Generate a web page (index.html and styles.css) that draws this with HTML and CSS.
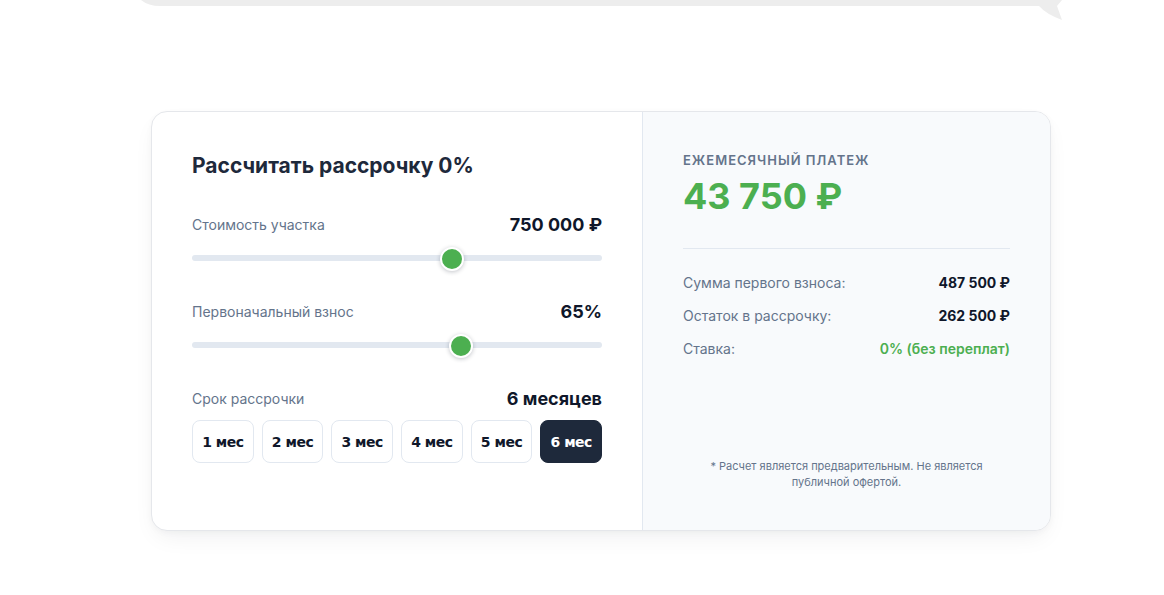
FILE: index.html
```html
<!DOCTYPE html>
<html lang="ru">
<head>
<meta charset="utf-8">
<title>Рассрочка</title>
<link rel="stylesheet" href="styles.css">
</head>
<body>
<div class="bubble">
  <svg width="1164" height="22" viewBox="0 0 1164 22">
    <path d="M130 -30 H1062 V0 L1057 6 L1062 20 Q1046 14 1039 6 H160 Q145 6 137 -4 Z" fill="#ededed"/>
  </svg>
</div>
<section class="section">
  <div class="card">
    <div class="calc">
      <h2 class="title">Рассчитать рассрочку 0%</h2>

      <div class="group">
        <div class="row">
          <span class="label">Стоимость участка</span>
          <span class="value">750 000 ₽</span>
        </div>
        <div class="slider">
          <div class="track"></div>
          <div class="thumb" style="left: 63.4%"></div>
        </div>
      </div>

      <div class="group">
        <div class="row">
          <span class="label">Первоначальный взнос</span>
          <span class="value">65%</span>
        </div>
        <div class="slider">
          <div class="track"></div>
          <div class="thumb" style="left: 65.6%"></div>
        </div>
      </div>

      <div class="group">
        <div class="row">
          <span class="label">Срок рассрочки</span>
          <span class="value">6 месяцев</span>
        </div>
        <div class="terms">
          <button class="term">1 мес</button>
          <button class="term">2 мес</button>
          <button class="term">3 мес</button>
          <button class="term">4 мес</button>
          <button class="term">5 мес</button>
          <button class="term active">6 мес</button>
        </div>
      </div>
    </div>

    <div class="result">
      <div class="result-label">Ежемесячный платеж</div>
      <div class="result-sum">43 750 ₽</div>
      <div class="divider"></div>
      <div class="lines">
        <div class="line"><span class="line-label">Сумма первого взноса:</span><span class="line-value">487 500 ₽</span></div>
        <div class="line"><span class="line-label">Остаток в рассрочку:</span><span class="line-value">262 500 ₽</span></div>
        <div class="line"><span class="line-label">Ставка:</span><span class="line-value green">0% (без переплат)</span></div>
      </div>
      <p class="note">* Расчет является предварительным. Не является публичной офертой.</p>
    </div>
  </div>
</section>
</body>
</html>
```

FILE: styles.css
```css
* { box-sizing: border-box; }

html, body {
  margin: 0;
  padding: 0;
  background: #ffffff;
  font-family: "Inter", "Noto Sans", "DejaVu Sans", sans-serif;
  color: #0f172a;
}

.bubble svg { display: block; }

.section {
  padding: 89px 0 60px 151px;
}

.card {
  width: 900px;
  min-height: 420px;
  display: grid;
  grid-template-columns: 490px 1fr;
  border: 1px solid #e5e7eb;
  border-radius: 16px;
  background: #ffffff;
  overflow: hidden;
  box-shadow: 0 10px 24px -6px rgba(15, 23, 42, 0.07), 0 2px 6px rgba(15, 23, 42, 0.03);
}

.calc {
  padding: 40px;
  display: flex;
  flex-direction: column;
}

.title {
  margin: 0 0 32px;
  font-size: 21px;
  line-height: 28px;
  font-weight: 700;
  color: #1e293b;
}

.group + .group { margin-top: 29px; }

.row {
  display: flex;
  justify-content: space-between;
  align-items: center;
  height: 24px;
}

.label {
  font-size: 14px;
  color: #64748b;
}

.value {
  font-size: 18px;
  font-weight: 700;
  color: #0f172a;
}

.slider {
  position: relative;
  height: 24px;
  margin-top: 10px;
  display: flex;
  align-items: center;
}

.track {
  width: 100%;
  height: 6px;
  border-radius: 3px;
  background: #e2e8f0;
}

.thumb {
  position: absolute;
  top: 1px;
  width: 24px;
  height: 24px;
  margin-left: -12px;
  border-radius: 50%;
  background: #4caf50;
  border: 2px solid #ffffff;
  box-shadow: 0 1px 4px rgba(15, 23, 42, 0.25);
}

.terms {
  display: flex;
  gap: 8px;
  margin-top: 10px;
}

.term {
  flex: 1;
  height: 43px;
  padding: 0;
  border: 1px solid #e2e8f0;
  border-radius: 8px;
  background: #ffffff;
  color: #0f172a;
  font-family: "DejaVu Sans", sans-serif;
  font-size: 14px;
  letter-spacing: -0.5px;
  font-weight: 700;
}

.term.active {
  background: #1e293b;
  border-color: #1e293b;
  color: #ffffff;
}

.result {
  background: #f8fafc;
  border-left: 1px solid #e2e8f0;
  padding: 40px;
  display: flex;
  flex-direction: column;
}

.result-label {
  font-size: 13px;
  line-height: 16px;
  font-weight: 600;
  letter-spacing: 1px;
  text-transform: uppercase;
  color: #64748b;
}

.result-sum {
  margin-top: 6px;
  font-size: 36px;
  line-height: 44px;
  font-weight: 700;
  color: #4caf50;
}

.divider {
  height: 1px;
  background: #e2e8f0;
  margin-top: 30px;
}

.lines {
  margin-top: 24px;
  display: flex;
  flex-direction: column;
  gap: 13px;
}

.line {
  display: flex;
  justify-content: space-between;
  align-items: center;
  font-size: 14px;
  line-height: 20px;
}

.line-label { color: #64748b; }

.line-value {
  font-weight: 700;
  color: #0f172a;
}

.line-value.green {
  color: #4caf50;
  font-weight: 600;
}

.note {
  margin: auto 0 0;
  padding: 0 20px;
  text-align: center;
  font-size: 11px;
  line-height: 16px;
  color: #64748b;
}
```
